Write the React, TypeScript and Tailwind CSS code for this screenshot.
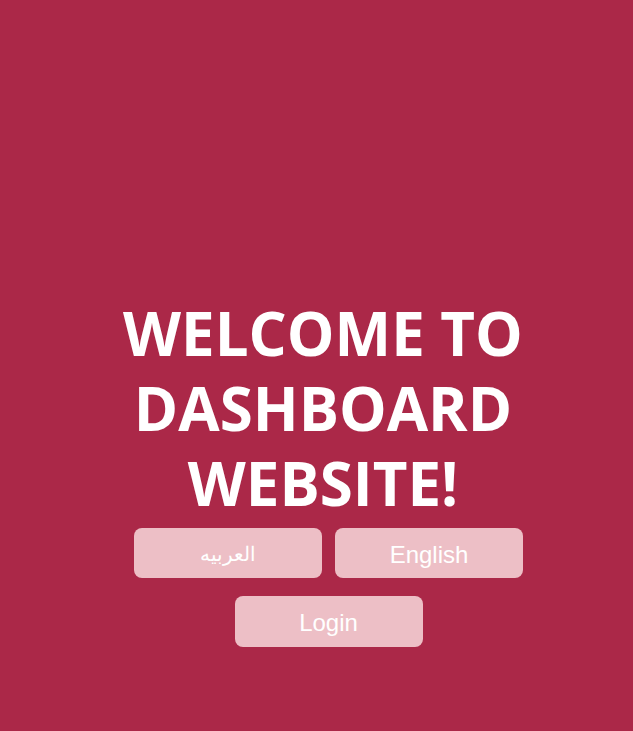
import React from 'react';

const App = () => {
  return (
    <div className="min-h-[731px] w-full bg-[#ab2848] flex flex-col items-center pt-[296px]">
      <h1
        className="text-white font-bold text-[60px] leading-[75px] text-center w-[460px] ml-[13px]"
        style={{ fontFamily: '"Open Sans", sans-serif' }}
      >
        WELCOME TO DASHBOARD WEBSITE!
      </h1>
      <div className="flex gap-[13px] mt-[7px] ml-[24px]" style={{ fontFamily: '"Liberation Sans", Arial, sans-serif' }}>
        <button className="w-[188px] h-[50px] rounded-[8px] bg-[#edbfc6] text-white text-[20px] pt-[2px]" dir="rtl">
          العربيه
        </button>
        <button className="w-[188px] h-[50px] rounded-[8px] bg-[#edbfc6] text-white text-[24px] pt-[3px]">
          English
        </button>
      </div>
      <button
        className="mt-[18px] ml-[24px] w-[188px] h-[51px] rounded-[8px] bg-[#edbfc6] text-white text-[24px] pt-[3px]"
        style={{ fontFamily: '"Liberation Sans", Arial, sans-serif' }}
      >
        Login
      </button>
    </div>
  );
};

export default App;
